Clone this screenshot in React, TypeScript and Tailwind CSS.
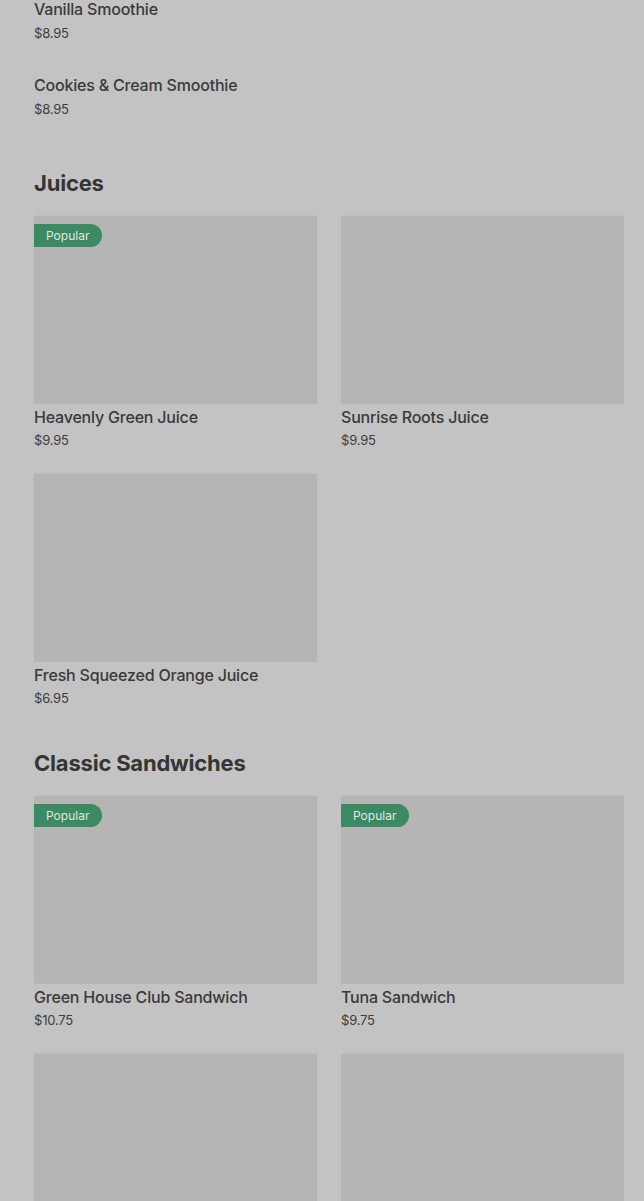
import React from "react";

type Item = { name: string; price: string; popular?: boolean };

const smoothies: Item[] = [
  { name: "Vanilla Smoothie", price: "$8.95" },
  { name: "Cookies & Cream Smoothie", price: "$8.95" },
];

const juices: Item[] = [
  { name: "Heavenly Green Juice", price: "$9.95", popular: true },
  { name: "Sunrise Roots Juice", price: "$9.95" },
  { name: "Fresh Squeezed Orange Juice", price: "$6.95" },
];

const sandwiches: Item[] = [
  { name: "Green House Club Sandwich", price: "$10.75", popular: true },
  { name: "Tuna Sandwich", price: "$9.75", popular: true },
  { name: "Turkey Avocado Sandwich", price: "$10.25" },
  { name: "Chicken Pesto Sandwich", price: "$10.25" },
];

function ItemCard({ item }: { item: Item }) {
  return (
    <div className="flex flex-col">
      <div className="relative h-[188px] bg-[#b5b5b5] shadow-[0_-1px_2px_rgba(0,0,0,0.03)]">
        {item.popular && (
          <span className="absolute left-0 top-2 flex h-[23px] w-[68px] items-center rounded-r-full bg-[#3b8a63] pl-3 text-[12px] text-[#dfe9e3]">
            Popular
          </span>
        )}
      </div>
      <div className="mt-[1px] text-[16px] font-medium leading-6 tracking-[-0.2px] text-[#3a3a3a]">
        {item.name}
      </div>
      <div className="mt-[1px] text-[13px] leading-5 tracking-[-0.2px] text-[#3d3d3d]">
        {item.price}
      </div>
    </div>
  );
}

function Section({ title, items }: { title: string; items: Item[] }) {
  return (
    <section className="flex flex-col">
      <h2 className="text-[22px] font-bold leading-7 tracking-[-0.2px] text-[#353535]">
        {title}
      </h2>
      <div className="mt-[19px] grid grid-cols-2 gap-x-6 gap-y-6">
        {items.map((it) => (
          <ItemCard key={it.name} item={it} />
        ))}
      </div>
    </section>
  );
}

export default function App() {
  return (
    <div
      className="h-[1201px] overflow-hidden bg-[#c3c3c3] pl-[34px] pr-5"
      style={{ fontFamily: "Inter, 'Noto Sans', sans-serif" }}
    >
      <div className="-mt-[3px] flex flex-col gap-7">
        {smoothies.map((s) => (
          <div key={s.name} className="flex flex-col">
            <div className="text-[16px] font-medium leading-6 tracking-[-0.2px] text-[#3a3a3a]">
              {s.name}
            </div>
            <div className="text-[13px] leading-6 tracking-[-0.2px] text-[#3d3d3d]">
              {s.price}
            </div>
          </div>
        ))}
      </div>
      <div className="mt-12 flex flex-col gap-[41px]">
        <Section title="Juices" items={juices} />
        <Section title="Classic Sandwiches" items={sandwiches} />
      </div>
    </div>
  );
}
